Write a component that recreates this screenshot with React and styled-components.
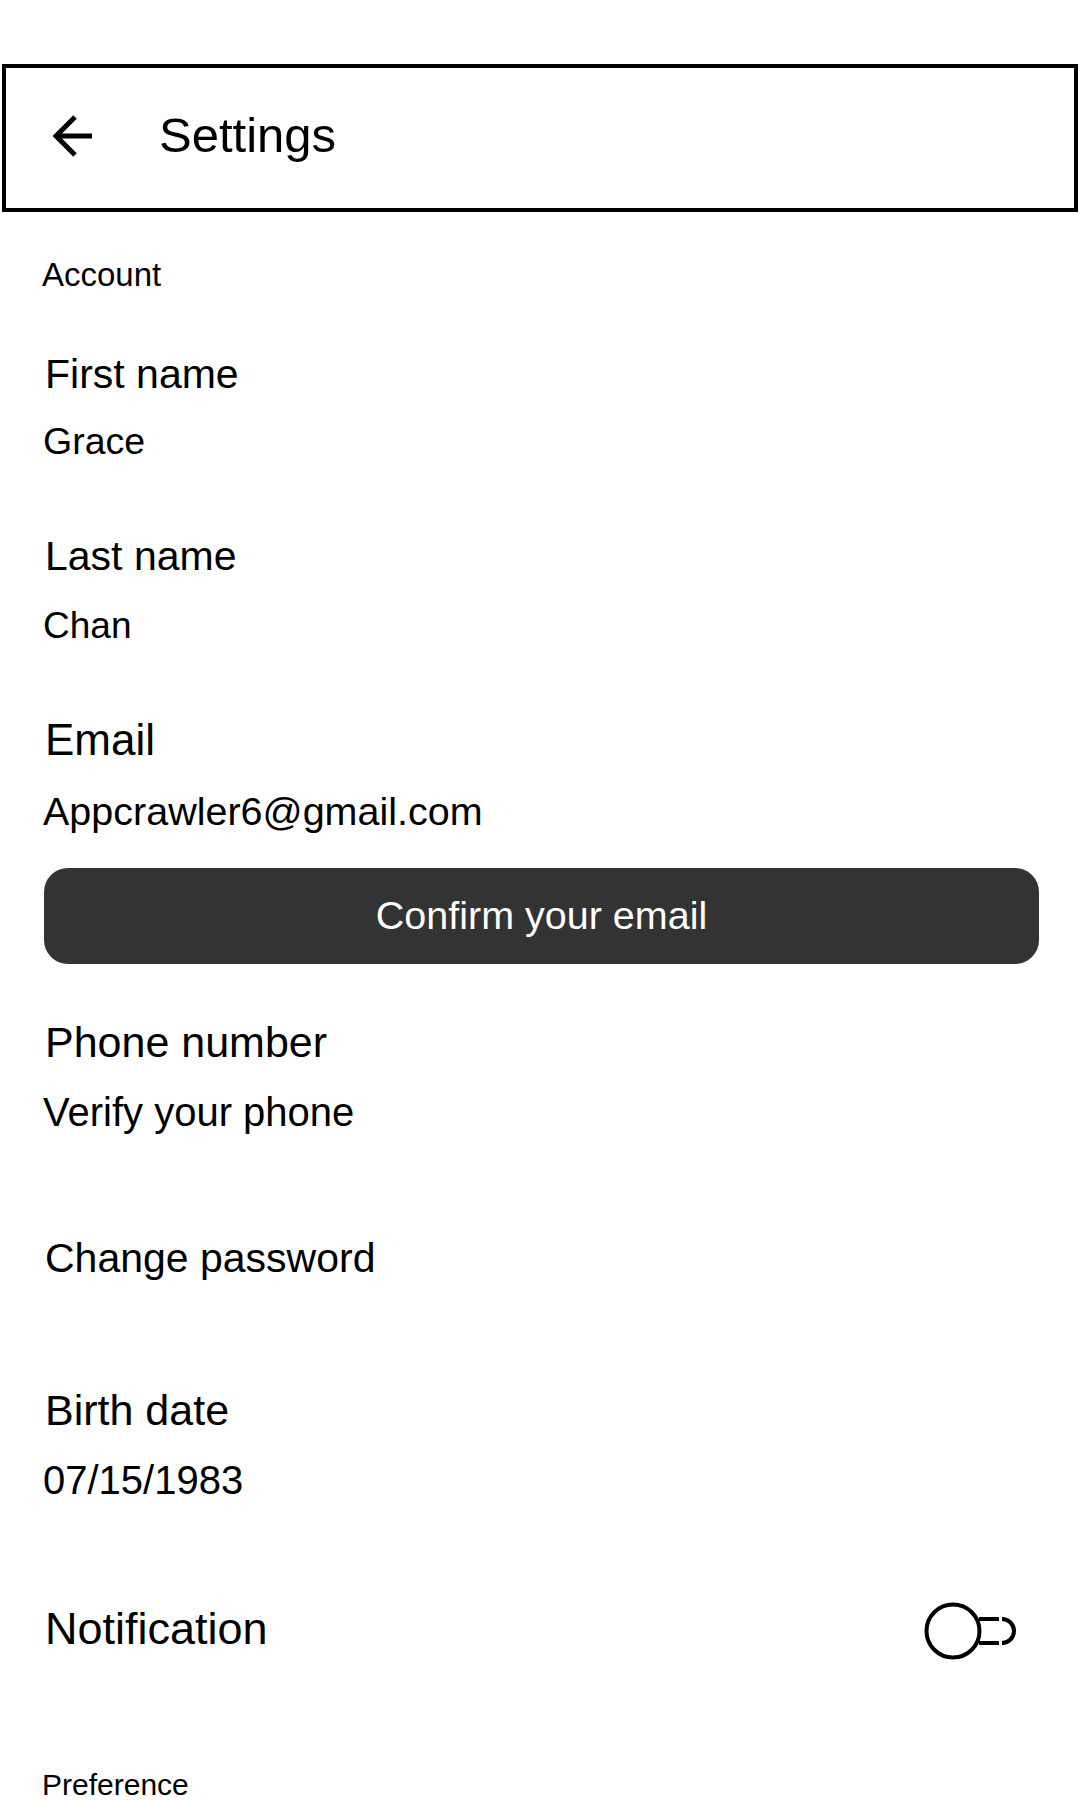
import React from 'react';
import styled, { createGlobalStyle } from 'styled-components';

const GlobalStyle = createGlobalStyle`
  html, body {
    margin: 0;
    padding: 0;
    background: #fff;
  }
  body {
    font-family: "Liberation Sans", Arial, sans-serif;
    color: #000;
  }
`;

const Page = styled.div`
  width: 1080px;
  min-height: 1800px;
  padding-top: 64px;
  box-sizing: border-box;
  overflow: hidden;
  background: #fff;
`;

const Header = styled.header`
  box-sizing: border-box;
  width: 1076px;
  height: 148px;
  margin-left: 2px;
  border: 4px solid #000;
  display: flex;
  align-items: center;
  padding-left: 46px;
`;

const BackButton = styled.button`
  display: flex;
  padding: 0;
  margin: 0 0 4px 0;
  border: none;
  background: none;
  cursor: pointer;
`;

const Title = styled.h1`
  margin: 0 0 0 63px;
  padding-bottom: 5px;
  font-size: 49px;
  line-height: 1;
  font-weight: 400;
`;

const Content = styled.main`
  display: flex;
  flex-direction: column;
  align-items: flex-start;
  padding: 0 41px 0 45px;
`;

const SectionTitle = styled.h2`
  margin: ${({ $top }) => $top}px 0 0 -3px;
  font-size: ${({ $size }) => $size}px;
  line-height: 1;
  font-weight: 400;
`;

const Label = styled.div`
  margin-top: ${({ $top }) => $top}px;
  font-size: ${({ $size }) => $size}px;
  line-height: 1;
`;

const Value = styled.div`
  margin: ${({ $top }) => $top || 30}px 0 0 -2px;
  font-size: ${({ $size }) => $size}px;
  line-height: 1;
`;

const ConfirmButton = styled.button`
  align-self: stretch;
  margin: 37px 0 0 -1px;
  height: 96px;
  border: none;
  border-radius: 24px;
  background: #333333;
  color: #fff;
  font-family: inherit;
  font-size: 39.5px;
  line-height: 1;
  display: flex;
  align-items: center;
  justify-content: center;
  cursor: pointer;
`;

const ToggleRow = styled.div`
  align-self: stretch;
  margin: 101px 21px 0 0;
  display: flex;
  align-items: center;
  justify-content: space-between;
`;

const ToggleLabel = styled.span`
  font-size: 45px;
  line-height: 1;
  padding-bottom: 6px;
`;

const Switch = styled.button`
  display: flex;
  padding: 0;
  border: none;
  background: none;
  cursor: pointer;
`;

function BackArrow() {
  return (
    <svg width="44" height="44" viewBox="0 0 44 44" fill="none">
      <path d="M4 22 H40 M23 3 L4 22 L23 41" stroke="#000" strokeWidth="5" />
    </svg>
  );
}

function ToggleOff() {
  return (
    <svg width="94" height="60" viewBox="0 0 94 60" fill="none">
      <circle cx="29" cy="30" r="26.5" stroke="#000" strokeWidth="4" />
      <path d="M55 18 H75 M55 42 H75" stroke="#000" strokeWidth="4" />
      <path d="M78 18 A12 12 0 0 1 78 42" stroke="#000" strokeWidth="4" />
    </svg>
  );
}

function Field({
  label, value, labelSize, valueSize, top, valueTop,
}) {
  return (
    <>
      <Label $size={labelSize} $top={top}>{label}</Label>
      {value && <Value $size={valueSize} $top={valueTop}>{value}</Value>}
    </>
  );
}

export default function App() {
  return (
    <Page>
      <GlobalStyle />
      <Header>
        <BackButton aria-label="Back">
          <BackArrow />
        </BackButton>
        <Title>Settings</Title>
      </Header>
      <Content>
        <SectionTitle $size={33} $top={46}>Account</SectionTitle>
        <Field label="First name" value="Grace" labelSize={41} valueSize={37.5} top={63} valueTop={28} />
        <Field label="Last name" value="Chan" labelSize={41} valueSize={37} top={75} valueTop={30} />
        <Field label="Email" value="Appcrawler6@gmail.com" labelSize={44} valueSize={39.5} top={74} />
        <ConfirmButton>Confirm your email</ConfirmButton>
        <Field label="Phone number" value="Verify your phone" labelSize={43} valueSize={40} top={57} valueTop={28} />
        <Field label="Change password" labelSize={41} top={106} />
        <Field label="Birth date" value="07/15/1983" labelSize={43} valueSize={40} top={110} valueTop={28} />
        <ToggleRow>
          <ToggleLabel>Notification</ToggleLabel>
          <Switch aria-label="Notification">
            <ToggleOff />
          </Switch>
        </ToggleRow>
        <SectionTitle $size={30} $top={109}>Preference</SectionTitle>
      </Content>
    </Page>
  );
}
